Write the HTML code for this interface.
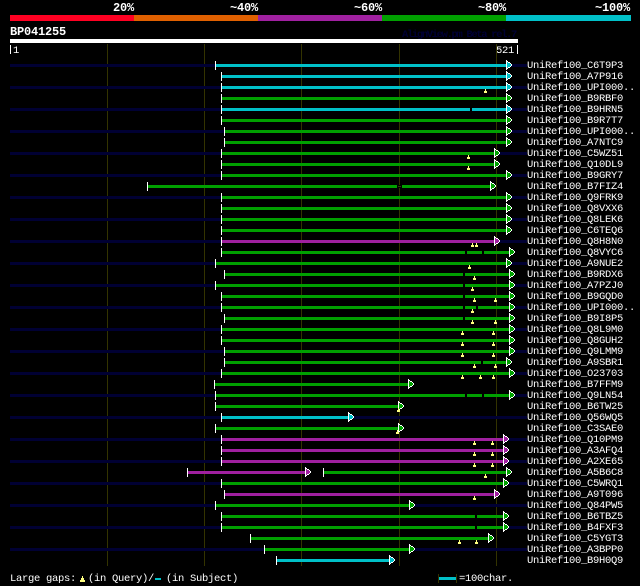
<!DOCTYPE html>
<html><head><meta charset="utf-8"><style>
html,body{margin:0;padding:0;background:#000;width:640px;height:586px;overflow:hidden}
svg{display:block}
text{font-family:"Liberation Mono",monospace;font-size:10.5px;letter-spacing:-0.3px;fill:#fff}
g text{transform:translateY(-1px)}
.h{font-weight:bold;font-size:12px;letter-spacing:-0.2px}
.n{fill:#000033}.c{fill:#00c0c8}.g{fill:#00a000}.p{fill:#a020a0}
.n,.b{height:3px}
.t{fill:#fff;width:1px;height:9px;y:-3px}
.v{fill:#333300;width:1px}
.w{fill:#fff}
.k{fill:#000}
.m{fill:#ffff80}
</style></head><body>
<svg width="640" height="586" viewBox="0 0 640 586" xmlns="http://www.w3.org/2000/svg" shape-rendering="crispEdges">
<defs>
<g id="a" transform="translate(0,-0.5)">
<path d="M1 -3h1v6h-1zM2 -2h2v4h-2zM4 -1h1v2h-1z"/>
<path class="w" d="M0 -5h1v10h-1zM1 -4h1v1h-1zM1 3h1v1h-1zM2 -3h2v1h-2zM2 2h2v1h-2zM4 -2h1v1h-1zM4 1h1v1h-1zM5 -1h1v2h-1z"/>
</g>
<path id="m" class="m" d="M0 3h1v2h1v2h-3v-2h1z"/>
<path id="s" class="k" d="M0 0h2v3h-2z"/>
</defs>
<rect x="0" y="0" width="640" height="586" fill="#000"/>
<text class="h" x="113" y="11">20%</text>
<text class="h" x="230" y="11">~40%</text>
<text class="h" x="354" y="11">~60%</text>
<text class="h" x="478" y="11">~80%</text>
<text class="h" x="595" y="11">~100%</text>
<rect x="10" y="15" width="124" height="6" fill="#ff0022"/>
<rect x="134" y="15" width="124" height="6" fill="#e06000"/>
<rect x="258" y="15" width="124" height="6" fill="#a020a0"/>
<rect x="382" y="15" width="124" height="6" fill="#00a000"/>
<rect x="506" y="15" width="125" height="6" fill="#00c0c8"/>
<text class="h" x="10" y="35">BP041255</text>
<text x="402" y="37" style="fill:#000033;font-weight:bold" textLength="115">AlignView.pm Beta rel.7</text>
<rect x="10" y="39" width="508" height="4" fill="#fff"/>
<rect x="10" y="45" width="1" height="9" fill="#fff"/>
<text x="13" y="53">1</text>
<text x="496" y="53">521</text>
<rect x="517" y="45" width="1" height="9" fill="#fff"/>
<rect class="v" x="107" y="44" height="522"/>
<rect class="v" x="204" y="44" height="522"/>
<rect class="v" x="301" y="44" height="522"/>
<rect class="v" x="399" y="44" height="522"/>
<rect class="v" x="496" y="44" height="522"/>

<g transform="translate(0,64)"><rect class="n" x="10" width="517"/><rect class="b c" x="215" width="291"/><rect class="t" x="215"/><use href="#a" x="506" y="1.5" class="c"/><text x="527" y="5">UniRef100_C6T9P3</text></g>
<g transform="translate(0,75)"><rect class="b c" x="221" width="285"/><rect class="t" x="221"/><use href="#a" x="506" y="1.5" class="c"/><text x="527" y="5">UniRef100_A7P916</text></g>
<g transform="translate(0,86)"><rect class="n" x="10" width="517"/><rect class="b c" x="221" width="285"/><rect class="t" x="221"/><use href="#a" x="506" y="1.5" class="c"/><use href="#m" x="485"/><text x="527" y="5">UniRef100_UPI000..</text></g>
<g transform="translate(0,97)"><rect class="b g" x="221" width="285"/><rect class="t" x="221"/><use href="#a" x="506" y="1.5" class="g"/><text x="527" y="5">UniRef100_B9RBF0</text></g>
<g transform="translate(0,108)"><rect class="n" x="10" width="517"/><rect class="b c" x="221" width="285"/><rect class="t" x="221"/><use href="#s" x="470"/><use href="#a" x="506" y="1.5" class="c"/><text x="527" y="5">UniRef100_B9HRN5</text></g>
<g transform="translate(0,119)"><rect class="b g" x="221" width="285"/><rect class="t" x="221"/><use href="#a" x="506" y="1.5" class="g"/><text x="527" y="5">UniRef100_B9R7T7</text></g>
<g transform="translate(0,130)"><rect class="n" x="10" width="517"/><rect class="b g" x="224" width="282"/><rect class="t" x="224"/><use href="#a" x="506" y="1.5" class="g"/><text x="527" y="5">UniRef100_UPI000..</text></g>
<g transform="translate(0,141)"><rect class="b g" x="224" width="282"/><rect class="t" x="224"/><use href="#a" x="506" y="1.5" class="g"/><text x="527" y="5">UniRef100_A7NTC9</text></g>
<g transform="translate(0,152)"><rect class="n" x="10" width="517"/><rect class="b g" x="221" width="273"/><rect class="t" x="221"/><use href="#a" x="494" y="1.5" class="g"/><use href="#m" x="468"/><text x="527" y="5">UniRef100_C5WZ51</text></g>
<g transform="translate(0,163)"><rect class="b g" x="221" width="273"/><rect class="t" x="221"/><use href="#a" x="494" y="1.5" class="g"/><use href="#m" x="468"/><text x="527" y="5">UniRef100_Q10DL9</text></g>
<g transform="translate(0,174)"><rect class="n" x="10" width="517"/><rect class="b g" x="221" width="285"/><rect class="t" x="221"/><use href="#a" x="506" y="1.5" class="g"/><text x="527" y="5">UniRef100_B9GRY7</text></g>
<g transform="translate(0,185)"><rect class="b g" x="147" width="343"/><rect class="t" x="147"/><rect x="397" width="5" height="3" fill="#000"/><rect x="398" y="1" width="3" height="1" fill="#2a4a00"/><use href="#a" x="490" y="1.5" class="g"/><text x="527" y="5">UniRef100_B7FIZ4</text></g>
<g transform="translate(0,196)"><rect class="n" x="10" width="517"/><rect class="b g" x="221" width="285"/><rect class="t" x="221"/><use href="#a" x="506" y="1.5" class="g"/><text x="527" y="5">UniRef100_Q9FRK9</text></g>
<g transform="translate(0,207)"><rect class="b g" x="221" width="285"/><rect class="t" x="221"/><use href="#a" x="506" y="1.5" class="g"/><text x="527" y="5">UniRef100_Q8VXX6</text></g>
<g transform="translate(0,218)"><rect class="n" x="10" width="517"/><rect class="b g" x="221" width="285"/><rect class="t" x="221"/><use href="#a" x="506" y="1.5" class="g"/><text x="527" y="5">UniRef100_Q8LEK6</text></g>
<g transform="translate(0,229)"><rect class="b g" x="221" width="285"/><rect class="t" x="221"/><use href="#a" x="506" y="1.5" class="g"/><text x="527" y="5">UniRef100_C6TEQ6</text></g>
<g transform="translate(0,240)"><rect class="n" x="10" width="517"/><rect class="b p" x="221" width="273"/><rect class="t" x="221"/><use href="#a" x="494" y="1.5" class="p"/><use href="#m" x="472"/><use href="#m" x="476"/><text x="527" y="5">UniRef100_Q8H8N0</text></g>
<g transform="translate(0,251)"><rect class="b g" x="221" width="288"/><rect class="t" x="221"/><use href="#s" x="465"/><use href="#s" x="482"/><use href="#a" x="509" y="1.5" class="g"/><text x="527" y="5">UniRef100_Q8VYC6</text></g>
<g transform="translate(0,262)"><rect class="n" x="10" width="517"/><rect class="b g" x="215" width="291"/><rect class="t" x="215"/><use href="#a" x="506" y="1.5" class="g"/><use href="#m" x="469"/><text x="527" y="5">UniRef100_A9NUE2</text></g>
<g transform="translate(0,273)"><rect class="b g" x="224" width="285"/><rect class="t" x="224"/><use href="#s" x="463"/><use href="#a" x="509" y="1.5" class="g"/><use href="#m" x="474"/><text x="527" y="5">UniRef100_B9RDX6</text></g>
<g transform="translate(0,284)"><rect class="n" x="10" width="517"/><rect class="b g" x="215" width="294"/><rect class="t" x="215"/><use href="#s" x="463"/><use href="#a" x="509" y="1.5" class="g"/><use href="#m" x="472"/><text x="527" y="5">UniRef100_A7PZJ0</text></g>
<g transform="translate(0,295)"><rect class="b g" x="221" width="288"/><rect class="t" x="221"/><use href="#s" x="463"/><use href="#a" x="509" y="1.5" class="g"/><use href="#m" x="474"/><use href="#m" x="495"/><text x="527" y="5">UniRef100_B9GQD0</text></g>
<g transform="translate(0,306)"><rect class="n" x="10" width="517"/><rect class="b g" x="221" width="288"/><rect class="t" x="221"/><use href="#s" x="463"/><use href="#s" x="476"/><use href="#a" x="509" y="1.5" class="g"/><use href="#m" x="472"/><text x="527" y="5">UniRef100_UPI000..</text></g>
<g transform="translate(0,317)"><rect class="b g" x="224" width="285"/><rect class="t" x="224"/><use href="#s" x="463"/><use href="#a" x="509" y="1.5" class="g"/><use href="#m" x="472"/><use href="#m" x="495"/><text x="527" y="5">UniRef100_B9I8P5</text></g>
<g transform="translate(0,328)"><rect class="n" x="10" width="517"/><rect class="b g" x="221" width="288"/><rect class="t" x="221"/><use href="#a" x="509" y="1.5" class="g"/><use href="#m" x="462"/><use href="#m" x="493"/><text x="527" y="5">UniRef100_Q8L9M0</text></g>
<g transform="translate(0,339)"><rect class="b g" x="221" width="288"/><rect class="t" x="221"/><use href="#a" x="509" y="1.5" class="g"/><use href="#m" x="462"/><use href="#m" x="493"/><text x="527" y="5">UniRef100_Q8GUH2</text></g>
<g transform="translate(0,350)"><rect class="n" x="10" width="517"/><rect class="b g" x="224" width="285"/><rect class="t" x="224"/><use href="#a" x="509" y="1.5" class="g"/><use href="#m" x="462"/><use href="#m" x="493"/><text x="527" y="5">UniRef100_Q9LMM9</text></g>
<g transform="translate(0,361)"><rect class="b g" x="224" width="282"/><rect class="t" x="224"/><use href="#s" x="481"/><use href="#a" x="506" y="1.5" class="g"/><use href="#m" x="474"/><use href="#m" x="495"/><text x="527" y="5">UniRef100_A9SBR1</text></g>
<g transform="translate(0,372)"><rect class="n" x="10" width="517"/><rect class="b g" x="221" width="288"/><rect class="t" x="221"/><use href="#a" x="509" y="1.5" class="g"/><use href="#m" x="462"/><use href="#m" x="480"/><use href="#m" x="493"/><text x="527" y="5">UniRef100_O23703</text></g>
<g transform="translate(0,383)"><rect class="b g" x="214" width="194"/><rect class="t" x="214"/><use href="#a" x="408" y="1.5" class="g"/><text x="527" y="5">UniRef100_B7FFM9</text></g>
<g transform="translate(0,394)"><rect class="n" x="10" width="517"/><rect class="b g" x="215" width="294"/><rect class="t" x="215"/><use href="#s" x="465"/><use href="#s" x="482"/><use href="#a" x="509" y="1.5" class="g"/><text x="527" y="5">UniRef100_Q9LN54</text></g>
<g transform="translate(0,405)"><rect class="b g" x="215" width="183"/><rect class="t" x="215"/><use href="#a" x="398" y="1.5" class="g"/><use href="#m" x="398"/><text x="527" y="5">UniRef100_B6TW25</text></g>
<g transform="translate(0,416)"><rect class="n" x="10" width="517"/><rect class="b c" x="221" width="127"/><rect class="t" x="221"/><use href="#a" x="348" y="1.5" class="c"/><text x="527" y="5">UniRef100_Q56WQ5</text></g>
<g transform="translate(0,427)"><rect class="b g" x="215" width="183"/><rect class="t" x="215"/><use href="#a" x="398" y="1.5" class="g"/><use href="#m" x="397"/><text x="527" y="5">UniRef100_C3SAE0</text></g>
<g transform="translate(0,438)"><rect class="n" x="10" width="517"/><rect class="b p" x="221" width="282"/><rect class="t" x="221"/><use href="#a" x="503" y="1.5" class="p"/><use href="#m" x="474"/><use href="#m" x="492"/><text x="527" y="5">UniRef100_Q10PM9</text></g>
<g transform="translate(0,449)"><rect class="b p" x="221" width="282"/><rect class="t" x="221"/><use href="#a" x="503" y="1.5" class="p"/><use href="#m" x="474"/><use href="#m" x="492"/><text x="527" y="5">UniRef100_A3AFQ4</text></g>
<g transform="translate(0,460)"><rect class="n" x="10" width="517"/><rect class="b p" x="221" width="282"/><rect class="t" x="221"/><use href="#a" x="503" y="1.5" class="p"/><use href="#m" x="474"/><use href="#m" x="492"/><text x="527" y="5">UniRef100_A2XE65</text></g>
<g transform="translate(0,471)"><rect class="b p" x="187" width="118"/><rect class="t" x="187"/><use href="#a" x="305" y="1.5" class="p"/><rect class="b g" x="323" width="183"/><rect class="t" x="323"/><use href="#a" x="506" y="1.5" class="g"/><use href="#m" x="485"/><text x="527" y="5">UniRef100_A5B6C8</text></g>
<g transform="translate(0,482)"><rect class="n" x="10" width="517"/><rect class="b g" x="221" width="282"/><rect class="t" x="221"/><use href="#a" x="503" y="1.5" class="g"/><text x="527" y="5">UniRef100_C5WRQ1</text></g>
<g transform="translate(0,493)"><rect class="b p" x="224" width="270"/><rect class="t" x="224"/><use href="#a" x="494" y="1.5" class="p"/><use href="#m" x="474"/><text x="527" y="5">UniRef100_A9T096</text></g>
<g transform="translate(0,504)"><rect class="n" x="10" width="517"/><rect class="b g" x="215" width="194"/><rect class="t" x="215"/><use href="#a" x="409" y="1.5" class="g"/><text x="527" y="5">UniRef100_Q84PW5</text></g>
<g transform="translate(0,515)"><rect class="b g" x="221" width="282"/><rect class="t" x="221"/><use href="#s" x="475"/><use href="#a" x="503" y="1.5" class="g"/><text x="527" y="5">UniRef100_B6TBZ5</text></g>
<g transform="translate(0,526)"><rect class="n" x="10" width="517"/><rect class="b g" x="221" width="282"/><rect class="t" x="221"/><use href="#s" x="475"/><use href="#a" x="503" y="1.5" class="g"/><text x="527" y="5">UniRef100_B4FXF3</text></g>
<g transform="translate(0,537)"><rect class="b g" x="250" width="238"/><rect class="t" x="250"/><use href="#a" x="488" y="1.5" class="g"/><use href="#m" x="459"/><use href="#m" x="476"/><text x="527" y="5">UniRef100_C5YGT3</text></g>
<g transform="translate(0,548)"><rect class="n" x="10" width="517"/><rect class="b g" x="264" width="145"/><rect class="t" x="264"/><use href="#a" x="409" y="1.5" class="g"/><text x="527" y="5">UniRef100_A3BPP0</text></g>
<g transform="translate(0,559)"><rect class="b c" x="276" width="113"/><rect class="t" x="276"/><use href="#a" x="389" y="1.5" class="c"/><text x="527" y="5">UniRef100_B9H0Q9</text></g>

<text x="10" y="581">Large gaps:</text>
<path class="m" d="M82 576h1v2h1v2h1v2h-5v-2h1v-2h1z"/>
<text x="88" y="581">(in Query)/</text>
<rect x="155" y="578" width="6" height="2" fill="#00c0c8"/>
<text x="166" y="581">(in Subject)</text>
<rect x="438" y="574" width="1" height="9" fill="#333300"/>
<rect x="456" y="574" width="1" height="9" fill="#333300"/>
<rect x="439" y="577" width="17" height="3" fill="#00c0c8"/>
<text x="459" y="581">=100char.</text>
</svg>
</body></html>
